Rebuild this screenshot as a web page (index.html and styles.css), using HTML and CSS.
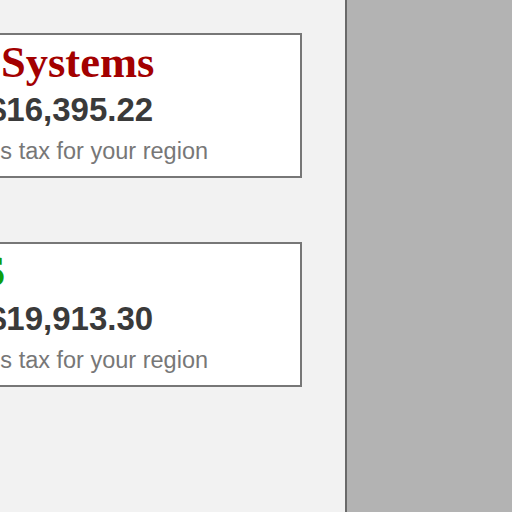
FILE: index.html
```html
<!DOCTYPE html>
<html>
<head>
<meta charset="utf-8">
<link rel="stylesheet" href="styles.css">
</head>
<body>
<div class="layout">
  <main class="main">
    <section class="card">
      <h2 class="title title-red">Systems</h2>
      <div class="price">$16,395.22</div>
      <div class="note">plus tax for your region</div>
    </section>
    <section class="card">
      <h2 class="title title-green title-clip">AWS</h2>
      <div class="price">$19,913.30</div>
      <div class="note">plus tax for your region</div>
    </section>
  </main>
  <aside class="side"></aside>
</div>
</body>
</html>
```
FILE: styles.css
```css
html, body {
  margin: 0;
  padding: 0;
  height: 100%;
  overflow: hidden;
}
.layout {
  display: flex;
  height: 512px;
}
.main {
  width: 345px;
  background: #f2f2f2;
  padding-top: 33px;
  display: flex;
  flex-direction: column;
  gap: 64px;
  overflow: hidden;
}
.side {
  flex: 1;
  background: #b3b3b3;
  border-left: 2px solid #6a6a6a;
}
.card {
  box-sizing: border-box;
  margin-left: -10px;
  width: 312px;
  height: 145px;
  background: #fff;
  border: 2px solid #777;
  padding: 3px 0 0 11px;
  overflow: hidden;
}
.title {
  margin: 0 0 0 -2px;
  font-family: "Liberation Serif", serif;
  font-weight: bold;
  font-size: 44.5px;
  line-height: 49px;
  white-space: nowrap;
}
.title-red { color: #a30000; }
.title-green { color: #0e9e0e; }
.title-clip { margin-left: -94px; }
.price {
  margin-left: -15px;
  font-family: "Liberation Sans", Arial, sans-serif;
  font-weight: bold;
  font-size: 33px;
  line-height: 46px;
  color: #3a3a3a;
  white-space: nowrap;
}
.note {
  margin-left: -34px;
  font-family: "Liberation Sans", Arial, sans-serif;
  font-size: 23.5px;
  line-height: 36px;
  color: #777;
  white-space: nowrap;
}
```
